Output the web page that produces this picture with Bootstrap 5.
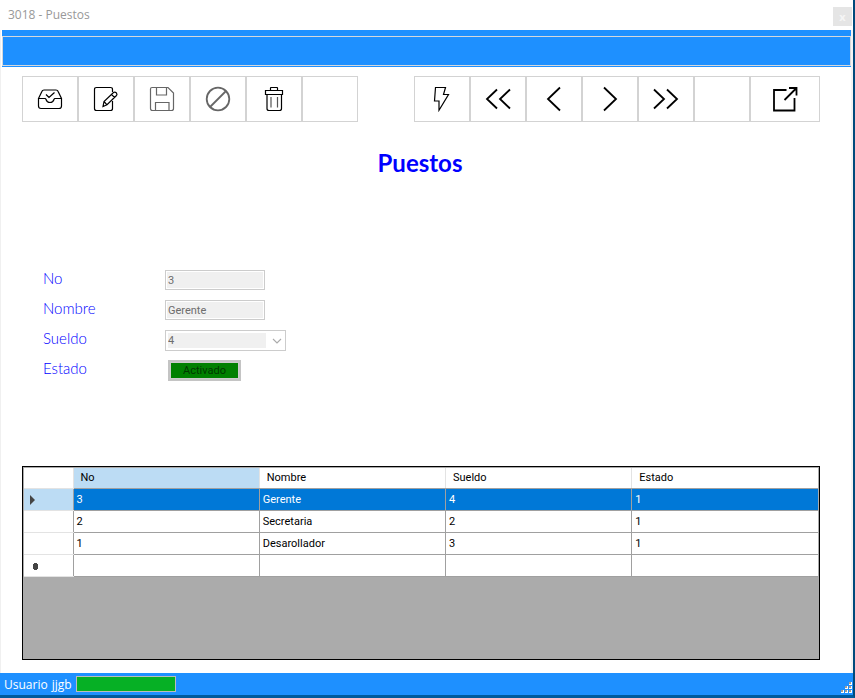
<!DOCTYPE html>
<html lang="es">
<head>
<meta charset="utf-8">
<meta name="viewport" content="width=device-width, initial-scale=1">
<title>3018 - Puestos</title>
<link rel="stylesheet" href="https://cdn.jsdelivr.net/npm/bootstrap@5.3.0/dist/css/bootstrap.min.css">
<script src="https://cdn.jsdelivr.net/npm/bootstrap@5.3.0/dist/js/bootstrap.bundle.min.js"></script>
<style>
  body { font: 11px/16px Roboto, "Liberation Sans", sans-serif; color: #000; background: #fff; }
  .app-window { border-right: 2px solid #004a7c; border-bottom: 3px solid #005a9c; }
  .title-bar { height: 30px; padding-left: 8px; padding-right: 1px; font: 12px/16px "Open Sans", sans-serif; color: #999; }
  .close-btn { width: 19px; height: 19px; margin-top: 3px; background: #e5e5e5; color: #f5f5f5; font: bold 11px/16px "Open Sans", sans-serif; }
  .frame { border-left: 1px solid #f0f0f0; border-right: 2px solid #f3f3f3; }
  .ribbon { margin-left: 1px; padding: 6px 0 1px; background: #1e90ff; }
  .ribbon-inner { height: 30px; border: 1px solid #d4d8dc; }
  .workspace { padding: 9px 31px 13px 21px; }
  .tool { width: 56px; height: 46px; padding: 0; border: 1px solid #d3d3d3; background: #fff; color: #000; display: flex; align-items: center; justify-content: center; }
  .tool:disabled { opacity: 1; color: #666; border-color: #d3d3d3; background: #fff; }
  .tool-wide { width: 70px; }
  .tool svg { width: 26px; height: 26px; fill: none; stroke: currentColor; stroke-width: 1.2; }
  .tool svg.bold-line { stroke-width: 1.8; }
  .page-title { margin: 26px 0 91px; padding-right: 2px; font: bold 24px/30px Lato, sans-serif; color: #00f; }
  .fields { padding-left: 21px; display: grid; grid-template-columns: 122px auto; grid-auto-rows: 21px; row-gap: 9px; justify-content: start; align-items: start; margin-bottom: 86px; }
  .fields label { font: 300 15px/18px Lato, sans-serif; color: #00f; }
  .fields .form-control, .fields .form-select, .fields .state-btn { margin-top: 1px; }
  .fields .form-control:disabled { width: 100px; height: 20px; min-height: 0; padding: 0 2px; border: 1px solid #ccc; border-radius: 0; background: #f0f0f0; box-shadow: inset 0 0 0 1px #fff; font-size: 11px; line-height: 16px; color: #6d6d6d; opacity: 1; }
  .fields .form-select:disabled { width: 121px; height: 21px; padding: 0 20px 0 2px; border: 1px solid #ccc; border-radius: 0; font-size: 11px; line-height: 16px; color: #6d6d6d; opacity: 1; background-color: #fff;
    background-image: url("data:image/svg+xml,%3Csvg xmlns='http://www.w3.org/2000/svg' viewBox='0 0 10 6'%3E%3Cpath d='M1 1l4 4 4-4' fill='none' stroke='%23aaa' stroke-width='1.1'/%3E%3C/svg%3E"), linear-gradient(#f0f0f0, #f0f0f0);
    background-position: right 3px center, 2px 2px; background-size: 10px 6px, 98px 15px; background-repeat: no-repeat; }
  .state-btn:disabled { width: 73px; height: 21px; margin-left: 3px; padding: 0; border: 2px solid #c4c4c4; border-radius: 0; background: #008000; box-shadow: inset 0 0 0 1px #ccc; font-size: 11px; line-height: 16px; color: #003800; opacity: 1; }
  .data-area { border: 1px solid #000; background: #ababab; padding: 1px; }
  .data-grid { table-layout: fixed; width: 100%; border-collapse: collapse; }
  .data-grid th, .data-grid td { height: 22px; padding: 1px 3px 0; border: 1px solid #a0a0a0; border-top: 0; background: #fff; font-weight: normal; line-height: 16px; }
  .data-grid thead th { height: 20px; padding: 0 7px; border-right-color: #e3e3e3; }
  .data-grid th:first-child { width: 49px; border-left: 0; border-bottom-color: #e3e3e3; padding: 1px 6px 0; }
  .data-grid tr > :last-child { border-right: 0; }
  .data-grid thead th.current { background: #bcdcf4; }
  .data-grid tr.chosen td { background: #0078d7; color: #fff; }
  .data-grid tr.chosen th { background: #bcdcf4; }
  .data-grid svg { display: block; width: 10px; height: 10px; fill: #444; }
  .status-bar { height: 22px; padding-left: 4px; background: #1e90ff; color: #fff; font: 12px/16px "Open Sans", sans-serif; }
  .status-bar span { padding-top: 1px; }
  .meter { width: 100px; height: 16px; margin-left: 4px; border: 1px solid #bcbcbc; border-radius: 0; background: #06b025; }
  .grip { width: 13px; height: 13px; margin-top: 7px; }
</style>
</head>
<body>
<div class="app-window d-flex flex-column min-vh-100">
  <header class="title-bar d-flex align-items-center justify-content-between">
    <span>3018 - Puestos</span>
    <button type="button" class="close-btn btn rounded-0 border-0 p-0" aria-label="Cerrar">x</button>
  </header>
  <div class="frame d-flex flex-column flex-grow-1">
    <div class="ribbon"><div class="ribbon-inner"></div></div>
    <main class="workspace d-flex flex-column flex-grow-1">
      <div class="d-flex justify-content-between" role="toolbar" aria-label="Acciones">
        <div class="d-flex">
          <button type="button" class="tool" aria-label="Ingresar"><svg viewBox="0 0 26 26"><path d="M1.5 12.5 5 5.3Q5.5 4 7 4H19Q20.500 4 21 5.300L24.500 12.500V20Q24.500 22.500 22 22.500H4Q1.500 22.500 1.500 20V12.500H8Q8.800 12.500 9 13.500Q10 16.500 13 16.500T17 13.500Q17.200 12.500 18 12.500H24.500M9 8.500 12 11.500 17.500 6.500"/></svg></button>
          <button type="button" class="tool" aria-label="Editar"><svg viewBox="0 0 26 26"><path d="M19.500 6V3.500Q19.500 1.500 17.500 1.500H3.500Q1.500 1.500 1.500 3.500V22.500Q1.500 24.500 3.500 24.500H17.500Q19.500 24.500 19.500 22.500V15M10 20.500 11 15.500 20.500 6.500Q21.800 5.500 23.300 6.800 24.600 8.300 23.500 9.500L14 18.800ZM11 15.500 14 18.800M18.500 8.300 21.500 11.500"/></svg></button>
          <button type="button" class="tool" aria-label="Guardar" disabled><svg viewBox="0 0 26 26"><path d="M3 1.500H19L24.500 7V22.500Q24.500 24.500 22.500 24.500H3.500Q1.500 24.500 1.500 22.500V3Q1.500 1.500 3 1.500ZM7.500 1.500V9H17.500V1.500M6.500 24.500V16.500H20V24.500"/></svg></button>
          <button type="button" class="tool" aria-label="Cancelar" disabled><svg viewBox="0 0 26 26" class="bold-line"><circle cx="13" cy="13" r="11.300"/><path d="M5 21 21 5"/></svg></button>
          <button type="button" class="tool" aria-label="Eliminar"><svg viewBox="0 0 26 26"><path d="M4.500 4.500H21.500V8.500H4.500ZM9.500 4.500V2Q9.500 1.500 10 1.500H16Q16.500 1.500 16.500 2V4.500M6 8.500V22.500Q6 24.500 8 24.500H18.500Q20.500 24.500 20.500 22.500V8.500"/><path stroke="#555" d="M10 11V21.500M16.500 11V21.500"/></svg></button>
          <button type="button" class="tool" aria-label="Sin acción"></button>
        </div>
        <div class="d-flex">
          <button type="button" class="tool" aria-label="Actualizar"><svg viewBox="0 0 26 26"><path d="M6.500 1.500H16.500L14.500 8.500H19.500L10 24.200V15H5.500Z"/></svg></button>
          <button type="button" class="tool" aria-label="Primero"><svg viewBox="0 0 26 26" class="bold-line"><path d="M12 3.500 2 13 12 22.500M25 3.500 15 13 25 22.500"/></svg></button>
          <button type="button" class="tool" aria-label="Anterior"><svg viewBox="0 0 26 26" class="bold-line"><path d="M19 1.500 7 13 19 24.500"/></svg></button>
          <button type="button" class="tool" aria-label="Siguiente"><svg viewBox="0 0 26 26" class="bold-line"><path d="M7 1.500 19 13 7 24.500"/></svg></button>
          <button type="button" class="tool" aria-label="Último"><svg viewBox="0 0 26 26" class="bold-line"><path d="M1 3.500 11 13 1 22.500M14 3.500 24 13 14 22.500"/></svg></button>
          <button type="button" class="tool" aria-label="Sin acción"></button>
          <button type="button" class="tool tool-wide" aria-label="Salir"><svg viewBox="0 0 26 26" class="bold-line"><path d="M14.500 4H2V24.500H22.500V12M12.500 14 24 2.500M17 2H24.500V9.500"/></svg></button>
        </div>
      </div>
      <h1 class="page-title text-center">Puestos</h1>
      <form class="fields">
        <label for="no">No</label><input class="form-control" id="no" type="text" value="3" disabled>
        <label for="nombre">Nombre</label><input class="form-control" id="nombre" type="text" value="Gerente" disabled>
        <label for="sueldo">Sueldo</label><select class="form-select" id="sueldo" disabled><option>4</option></select>
        <label for="estado">Estado</label><button class="state-btn" id="estado" type="button" disabled>Activado</button>
      </form>
      <div class="data-area flex-grow-1">
        <table class="data-grid">
          <thead><tr><th></th><th class="current" scope="col">No</th><th scope="col">Nombre</th><th scope="col">Sueldo</th><th scope="col">Estado</th></tr></thead>
          <tbody>
            <tr class="chosen"><th scope="row"><svg viewBox="0 0 10 10"><path d="M0 0 5 5 0 10Z"/></svg></th><td>3</td><td>Gerente</td><td>4</td><td>1</td></tr>
            <tr><th></th><td>2</td><td>Secretaria</td><td>2</td><td>1</td></tr>
            <tr><th></th><td>1</td><td>Desarollador</td><td>3</td><td>1</td></tr>
            <tr><th><svg viewBox="0 0 10 10"><path d="M3 3h1v-1h3v1h1v5H7v1H4V8H3Z"/></svg></th><td></td><td></td><td></td><td></td></tr>
          </tbody>
        </table>
      </div>
    </main>
  </div>
  <footer class="status-bar d-flex align-items-center">
    <span>Usuario</span><span class="ms-1">jjgb</span>
    <div class="meter" role="progressbar" aria-label="Progreso" aria-valuenow="100" aria-valuemin="0" aria-valuemax="100"></div>
    <svg class="grip ms-auto" viewBox="0 0 13 13"><path fill="#fff" d="M9 1h3v3H9zM5 5h3v3H5zM9 5h3v3H9zM1 9h3v3H1zM5 9h3v3H5zM9 9h3v3H9z"/><path fill="#a79c91" d="M9 1h2v2H9zM5 5h2v2H5zM9 5h2v2H9zM1 9h2v2H1zM5 9h2v2H5zM9 9h2v2H9z"/></svg>
  </footer>
</div>
</body>
</html>
